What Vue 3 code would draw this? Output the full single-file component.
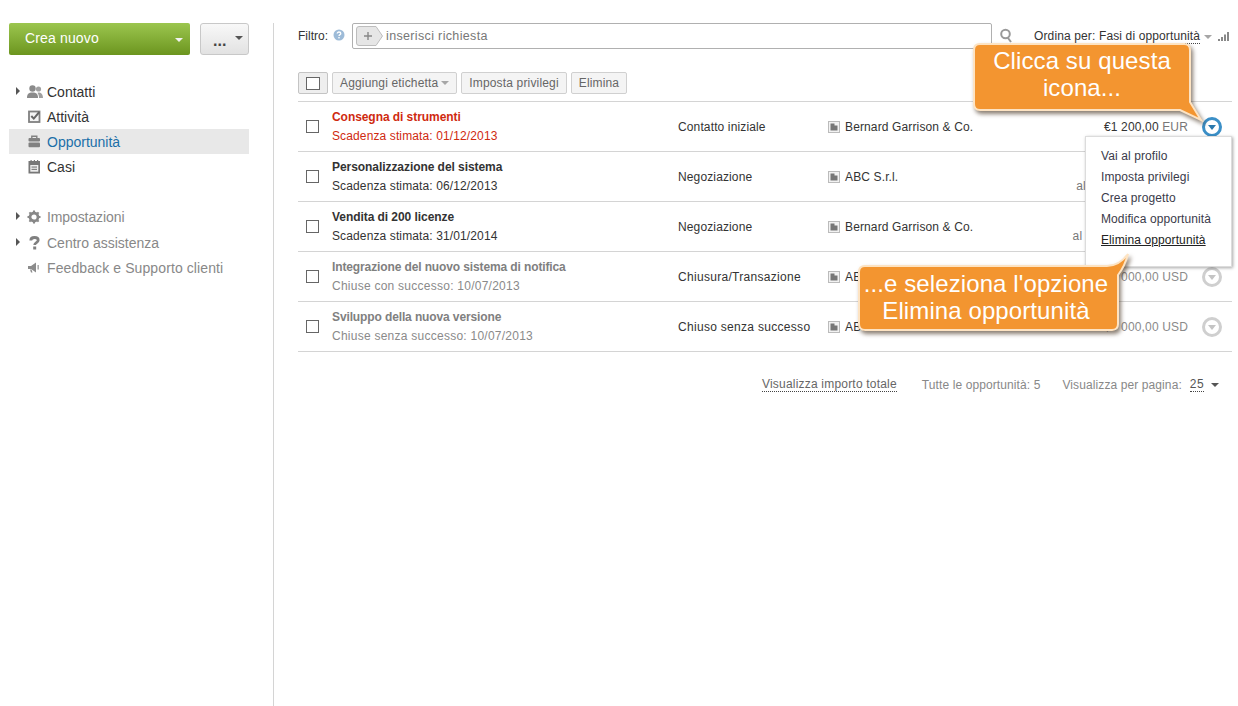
<script setup>
const nav1 = [
  { label: 'Contatti', icon: 'people', arrow: true },
  { label: 'Attività', icon: 'check' },
  { label: 'Opportunità', icon: 'case', active: true },
  { label: 'Casi', icon: 'cal' }
]
const nav2 = [
  { label: 'Impostazioni', icon: 'gear', arrow: true },
  { label: 'Centro assistenza', icon: 'help', arrow: true },
  { label: 'Feedback e Supporto clienti', icon: 'mega' }
]
const rows = [
  { title: 'Consegna di strumenti', date: 'Scadenza stimata: 01/12/2013', phase: 'Contatto iniziale', company: 'Bernard Garrison & Co.', amount: '€1 200,00', cur: 'EUR', kind: 'late', open: true },
  { title: 'Personalizzazione del sistema', date: 'Scadenza stimata: 06/12/2013', phase: 'Negoziazione', company: 'ABC S.r.l.', amount: '€5 000,00', cur: 'EUR', note: 'al mese per 12 mesi' },
  { title: 'Vendita di 200 licenze', date: 'Scadenza stimata: 31/01/2014', phase: 'Negoziazione', company: 'Bernard Garrison & Co.', amount: '€8 000,00', cur: 'EUR', note: 'al mese, per 24 mesi' },
  { title: 'Integrazione del nuovo sistema di notifica', date: 'Chiuse con successo: 10/07/2013', phase: 'Chiusura/Transazione', company: 'ABC S.r.l.', amount: '$3 000,00', cur: 'USD', kind: 'closed' },
  { title: 'Sviluppo della nuova versione', date: 'Chiuse senza successo: 10/07/2013', phase: 'Chiuso senza successo', company: 'ABC S.r.l.', amount: '$9 000,00', cur: 'USD', kind: 'closed' }
]
const menu = ['Vai al profilo', 'Imposta privilegi', 'Crea progetto', 'Modifica opportunità', 'Elimina opportunità']
</script>

<template>
  <div class="page">
    <aside class="side">
      <div class="side-btns">
        <button class="create"><span>Crea nuovo</span><i class="caret white"></i></button>
        <button class="more"><span>...</span><i class="caret dark"></i></button>
      </div>
      <nav class="nav first">
        <a v-for="n in nav1" :key="n.label" class="nav-item" :class="{ active: n.active }">
          <i v-if="n.arrow" class="tri"></i>
          <svg class="nav-icon" viewBox="0 0 16 14">
            <template v-if="n.icon === 'people'">
              <circle cx="5.500" cy="3.500" r="3.200" fill="#8a8a8a" />
              <path d="M0 13c0-4 1.500-5.500 5.500-5.500S11 9 11 13z" fill="#8a8a8a" />
              <circle cx="11.500" cy="4" r="2.600" fill="#a0a0a0" />
              <path d="M11 7.500c3.500 0 5 2 5 5.500h-4c0-2-.5-4-1.500-5z" fill="#a0a0a0" />
            </template>
            <template v-else-if="n.icon === 'check'">
              <rect x="2" y="1.500" width="10.500" height="10.500" fill="#f4f4f4" stroke="#808080" stroke-width="1.800" />
              <path d="M4.300 6l2.500 2.600 5.500-6.600" fill="none" stroke="#666" stroke-width="2" />
            </template>
            <template v-else-if="n.icon === 'case'">
              <path d="M4.800 3V1.300h5V3" fill="none" stroke="#808080" stroke-width="1.400" />
              <rect x="1.500" y="3" width="11.500" height="3.600" rx="1" fill="#808080" />
              <rect x="1.500" y="7.500" width="11.500" height="4.800" rx="1" fill="#808080" />
            </template>
            <template v-else-if="n.icon === 'cal'">
              <rect x="1.500" y="1" width="11.500" height="12.500" fill="#777" />
              <rect x="3.500" y="0" width="1.200" height="2" fill="#777" />
              <rect x="6.800" y="0" width="1.200" height="2" fill="#777" />
              <rect x="10" y="0" width="1.200" height="2" fill="#777" />
              <rect x="3.300" y="5" width="8" height="6.700" fill="#eee" />
              <rect x="4.500" y="6.500" width="5.500" height="1.100" fill="#777" />
              <rect x="4.500" y="8.800" width="5.500" height="1.100" fill="#777" />
            </template>
          </svg>
          <span>{{ n.label }}</span>
        </a>
      </nav>
      <nav class="nav second">
        <a v-for="n in nav2" :key="n.label" class="nav-item muted">
          <i v-if="n.arrow" class="tri"></i>
          <svg class="nav-icon" viewBox="0 0 16 14">
            <template v-if="n.icon === 'gear'">
              <circle cx="7" cy="7" r="4" fill="none" stroke="#888" stroke-width="2.800" />
              <path d="M7 0.500v13M0.500 7h13M2.400 2.400l9.200 9.200M11.600 2.400l-9.200 9.200" stroke="#888" stroke-width="2" stroke-dasharray="2 9.200" />
            </template>
            <template v-else-if="n.icon === 'help'">
              <path d="M3.800 4.500C3.800 2.300 5.300 1.500 7.500 1.500S11.200 2.500 11.200 4.300c0 2.400-3.500 2.200-3.500 4.600" fill="none" stroke="#808080" stroke-width="2.800" />
              <rect x="6.200" y="10.500" width="3" height="3" fill="#808080" />
            </template>
            <template v-else>
              <path d="M1 5h3l5-3.500v10L4 8H1z" fill="#8c8c8c" />
              <path d="M3 8.500l1 3h1.500l-1-3z" fill="#8c8c8c" />
              <rect x="10.500" y="4" width="1.300" height="4.500" fill="#999" />
            </template>
          </svg>
          <span>{{ n.label }}</span>
        </a>
      </nav>
    </aside>

    <main class="main">
      <div class="filter">
        <span class="filter-label">Filtro:</span>
        <svg class="help" viewBox="0 0 12 12"><circle cx="6" cy="6" r="5.500" fill="#9dbbd8" /><path d="M4.200 4.600C4.200 3.500 5 3 6 3s1.800.5 1.800 1.500C7.800 5.700 6 5.600 6 7" fill="none" stroke="#fff" stroke-width="1.300" /><rect x="5.300" y="8" width="1.400" height="1.400" fill="#fff" /></svg>
        <div class="query">
          <svg class="tag" width="27" height="20" viewBox="0 0 27 20">
            <path d="M.5 3Q.5.500 3 .5H20L26.500 10 20 19.500H3Q.5 19.500.5 17z" fill="#e6e6e6" stroke="#bdbdbd" />
            <path d="M8 10h8M12 6v8" stroke="#888" stroke-width="1.400" />
          </svg>
          <span>inserisci richiesta</span>
        </div>
        <svg class="search" viewBox="0 0 14 16"><circle cx="6.500" cy="6" r="4.300" fill="none" stroke="#999" stroke-width="2" /><path d="M9 10l3 4" stroke="#999" stroke-width="2" /></svg>
        <div class="sort">
          <span class="sort-text">Ordina per: <span class="dotted">Fasi di opportunità</span></span>
          <i class="caret grey"></i>
          <svg class="bars" width="11" height="9" viewBox="0 0 11 9"><rect x="0" y="7" width="2" height="2" fill="#888" /><rect x="3" y="5" width="2" height="4" fill="#888" /><rect x="6" y="2.500" width="2" height="6.500" fill="#888" /><rect x="9" y="0" width="2" height="9" fill="#888" /></svg>
        </div>
      </div>

      <div class="toolbar">
        <button class="tb-check"><i class="box"></i></button>
        <button class="tb">Aggiungi etichetta<i class="caret grey"></i></button>
        <button class="tb">Imposta privilegi</button>
        <button class="tb">Elimina</button>
      </div>

      <div class="list">
        <div v-for="r in rows" :key="r.title" class="row" :class="r.kind">
          <i class="box"></i>
          <div class="name">
            <div class="title">{{ r.title }}</div>
            <div class="date">{{ r.date }}</div>
          </div>
          <div class="phase">{{ r.phase }}</div>
          <div class="company">
            <svg class="co-icon" width="12" height="12" viewBox="0 0 12 12"><rect x=".5" y=".5" width="11" height="11" fill="#f2f2f2" stroke="#bbb" /><path d="M2.500 2.500h4l0 2h3v5h-7z" fill="#777" /></svg>
            <span>{{ r.company }}</span>
          </div>
          <div class="amount">
            <div class="amount-line">{{ r.amount }} <span class="cur">{{ r.cur }}</span></div>
            <div v-if="r.note" class="note">{{ r.note }}</div>
          </div>
          <span class="round" :class="{ on: r.open }"><i></i></span>
        </div>
      </div>

      <div class="foot">
        <span class="dotted total">Visualizza importo totale</span>
        <span class="count">Tutte le opportunità: 5</span>
        <span class="perpage">Visualizza per pagina:</span>
        <span class="dotted size">25</span>
        <i class="caret dark small"></i>
      </div>
    </main>

    <ul class="menu">
      <li v-for="m in menu" :key="m" :class="{ hover: m === 'Elimina opportunità' }">{{ m }}</li>
    </ul>

    <div class="bubble b1">
      <svg class="bubble-bg" width="240" height="90" viewBox="0 0 240 90">
        <path d="M8 3H212Q218 3 218 9V61L229 79 208 69H8Q2 69 2 63V9Q2 3 8 3Z" fill="#f39530" stroke="#fde3c2" stroke-width="2" />
      </svg>
      <p>Clicca su questa<br>icona...</p>
    </div>

    <div class="bubble b2">
      <svg class="bubble-bg" width="290" height="90" viewBox="0 0 290 90">
        <path d="M8 14H250Q262 14 271 2 268 14 261 23V72Q261 78 255 78H8Q2 78 2 72V20Q2 14 8 14Z" fill="#f39530" stroke="#fde3c2" stroke-width="2" />
      </svg>
      <p>...e seleziona l'opzione<br>Elimina opportunità</p>
    </div>
  </div>
</template>

<style>
html, body { background: #fff; }
</style>

<style scoped>
.page {
  position: relative;
  display: flex;
  width: 1238px;
  height: 706px;
  overflow: hidden;
  background: #fff;
  font-family: "Liberation Sans", Arial, sans-serif;
  font-size: 12px;
  color: #333;
}
i { display: inline-block; }
button { font-family: inherit; cursor: pointer; }

.side {
  width: 240px;
  margin-top: 23px;
  padding-left: 9px;
  padding-right: 24px;
  border-right: 1px solid #d4d4d4;
  flex: none;
}
.side-btns { display: flex; justify-content: space-between; height: 32px; }
.create {
  width: 181px;
  padding: 0 7px 2px 16px;
  display: flex;
  align-items: center;
  justify-content: space-between;
  border: 0;
  border-radius: 2px;
  background: linear-gradient(#9cc64f, #6c951f);
  color: #fff;
  font-size: 14px;
  letter-spacing: .15px;
}
.create .caret { margin-top: 3px; }
.more {
  width: 49px;
  padding: 0 5px 0 12px;
  display: flex;
  align-items: center;
  justify-content: space-between;
  border: 1px solid #c8c8c8;
  border-radius: 3px;
  background: linear-gradient(#f8f8f8, #e2e2e2);
  color: #444;
  font-size: 16px;
  font-weight: 700;
}
.more span { margin-top: 3px; }
.more .caret { margin-top: -3px; }
.caret {
  width: 0;
  height: 0;
  border-left: 4px solid transparent;
  border-right: 4px solid transparent;
  border-top: 4px solid #999;
}
.caret.white { border-top-color: #f2f2f2; }
.caret.dark { border-top-color: #555; }
.caret.grey { border-top-color: #a6a6a6; }

.nav.first { margin-top: 24px; }
.nav.second { margin-top: 25px; }
.nav-item {
  position: relative;
  display: flex;
  align-items: center;
  height: 25px;
  font-size: 14px;
  color: #333;
}
.nav-item.active { background: #e8e8e8; color: #1b6fa8; }
.nav-item.muted { color: #888; }
.nav-item.muted:nth-child(2) { margin-top: 1px; }
.nav-item.muted:nth-child(3) span { letter-spacing: .1px; }
.nav-item.muted:nth-child(1) span { letter-spacing: -.1px; }
.nav-item span { margin-left: 4px; }
.nav-icon { width: 16px; height: 14px; margin-left: 18px; flex: none; }
.tri {
  position: absolute;
  left: 7px;
  top: 8px;
  border-top: 4px solid transparent;
  border-bottom: 4px solid transparent;
  border-left: 4px solid #555;
}

.main { flex: 1; min-width: 0; padding: 23px 6px 0 24px; }
.filter { display: flex; align-items: center; height: 26px; }
.filter-label { width: 35px; flex: none; }
.help { width: 12px; height: 12px; flex: none; margin-right: 7px; margin-top: -2px; }
.query {
  width: 640px;
  height: 26px;
  box-sizing: border-box;
  flex: none;
  display: flex;
  align-items: center;
  padding: 0 0 0 3px;
  border: 1px solid #b0b0b0;
  border-radius: 2px;
  color: #777;
  font-size: 12.500px;
  letter-spacing: .35px;
}
.tag { margin-right: 3px; margin-top: -1px; }
.search { width: 14px; height: 16px; margin-left: 7px; flex: none; }
.sort { display: flex; align-items: center; margin-left: 21px; white-space: nowrap; }
.sort-text { margin-right: 4px; letter-spacing: .13px; }
.sort .caret { margin-right: 6px; margin-top: 2px; }
.bars { margin-top: 1px; }
.dotted { border-bottom: 1px dotted #444; }

.toolbar { display: flex; gap: 4px; margin-top: 23px; height: 22px; }
.tb, .tb-check {
  height: 22px;
  border: 1px solid #d0d0d0;
  border-radius: 2px;
  background: #f4f4f4;
  color: #666;
  font-size: 12px;
  letter-spacing: .16px;
  padding: 0 7px;
  display: flex;
  align-items: center;
  gap: 3px;
  white-space: nowrap;
}
.tb-check { width: 30px; justify-content: center; padding: 0; border-color: #c4c4c4; background: #eee; }
.box {
  width: 11px;
  height: 11px;
  border: 1px solid #666;
  background: #fff;
  flex: none;
}
.tb-check .box { width: 12px; height: 11px; }

.list { margin-top: 7px; border-top: 1px solid #d4d4d4; }
.row {
  display: flex;
  align-items: center;
  height: 49px;
  border-bottom: 1px solid #d4d4d4;
}
.row > .box { margin-left: 8px; margin-right: 13px; }
.name { width: 346px; flex: none; }
.title { font-weight: 700; line-height: 15px; letter-spacing: -.06px; white-space: nowrap; }
.date { line-height: 15px; margin-top: 4px; letter-spacing: .12px; white-space: nowrap; }
.phase { width: 150px; flex: none; letter-spacing: .13px; white-space: nowrap; }
.company { width: 240px; flex: none; display: flex; align-items: center; gap: 5px; letter-spacing: .13px; white-space: nowrap; }
.amount { width: 120px; flex: none; text-align: right; letter-spacing: .15px; white-space: nowrap; }
.cur { color: #777; }
.note { font-size: 12px; color: #777; line-height: 13px; margin-top: 1px; letter-spacing: .2px; }
.amount-line { line-height: 14px; }
.row:nth-child(2) .amount, .row:nth-child(3) .amount { margin-top: 5px; }

.late .title, .late .date { color: #cf2a10; }
.closed .title, .closed .date, .closed .amount-line, .closed .cur { color: #8a8a8a; }
.closed .title { color: #808080; letter-spacing: -.12px; }
.closed .date { letter-spacing: .25px; }
.closed .phase { letter-spacing: .3px; }
.closed .phase, .closed .company { color: #333; }

.round {
  box-sizing: border-box;
  width: 20px;
  height: 20px;
  margin-left: 14px;
  flex: none;
  border: 3px solid #cfcfcf;
  border-radius: 50%;
  display: flex;
  align-items: center;
  justify-content: center;
}
.round i {
  width: 0;
  height: 0;
  margin-top: 2px;
  border-left: 4.500px solid transparent;
  border-right: 4.500px solid transparent;
  border-top: 5px solid #c4c4c4;
}
.round.on { border-color: #3b8fc7; }
.round.on i { border-top-color: #2a78ad; }

.foot {
  display: flex;
  align-items: center;
  justify-content: flex-end;
  margin-top: 25px;
  padding-right: 13px;
  color: #888;
  white-space: nowrap;
  letter-spacing: .1px;
}
.total { color: #666; margin-right: 25px; letter-spacing: .2px; }
.count { margin-right: 22px; }
.perpage { margin-right: 8px; }
.size { color: #555; margin-right: 7px; letter-spacing: .4px; }

.menu {
  position: absolute;
  left: 1085px;
  top: 136px;
  box-sizing: border-box;
  width: 147px;
  height: 131px;
  margin: 0;
  padding: 9px 0 0 15px;
  list-style: none;
  background: #fff;
  border: 1px solid #dcdcdc;
  box-shadow: 1px 1px 3px rgba(0, 0, 0, .35);
  letter-spacing: .1px;
}
.menu li { height: 21px; line-height: 21px; color: #3a3a4a; white-space: nowrap; }
.menu li.hover { text-decoration: underline; color: #222; }

.bubble { position: absolute; color: #fff; font-size: 24px; letter-spacing: .1px; text-align: center; }
.bubble p { position: relative; margin: 0; line-height: 27px; }
.bubble-bg {
  position: absolute;
  left: 0;
  top: 0;
  overflow: visible;
  filter: drop-shadow(2px 3px 2px rgba(60, 40, 20, .6));
}
.b1 { left: 972px; top: 41px; width: 220px; height: 70px; }
.b1 p { padding-top: 6px; }
.b2 { left: 857px; top: 252px; width: 258px; height: 80px; }
.b2 p { padding-top: 18px; }
</style>
